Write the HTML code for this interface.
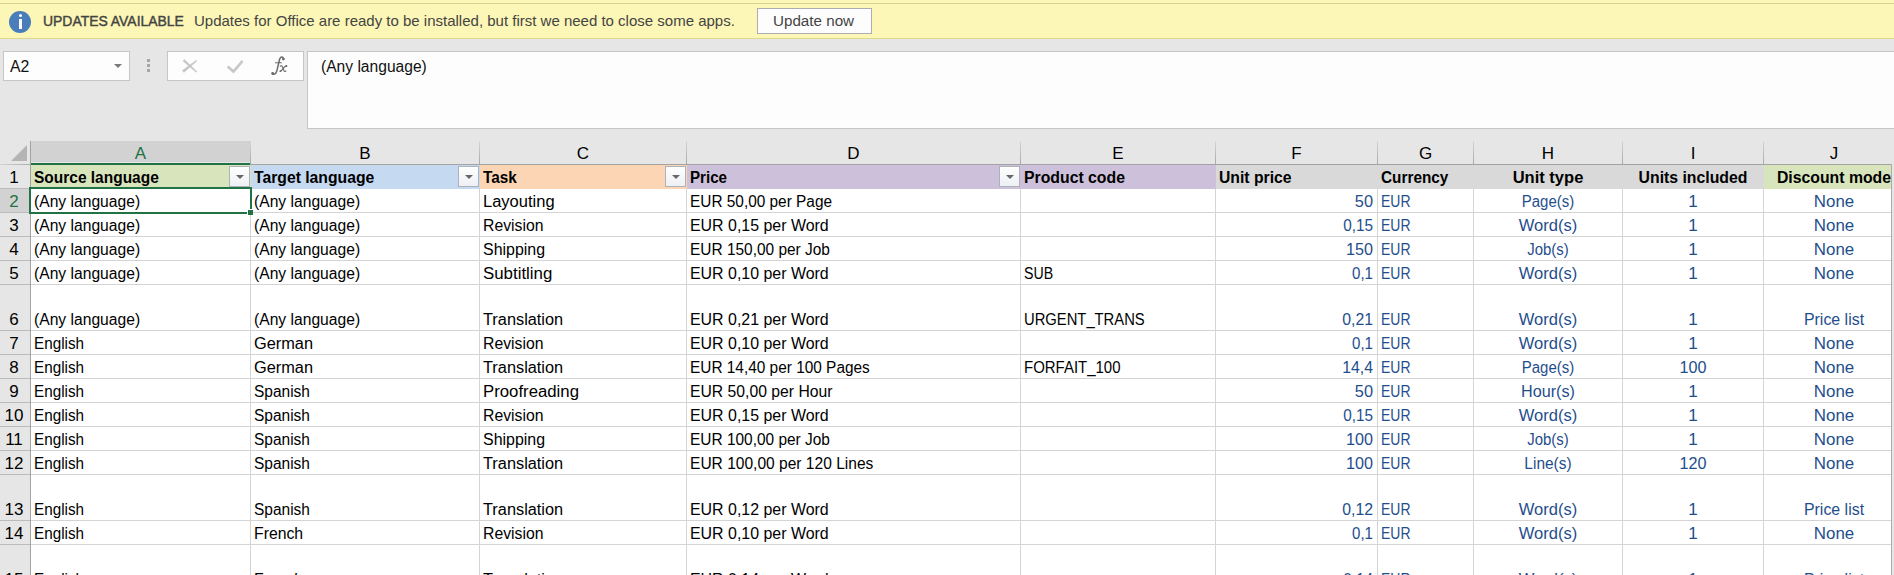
<!DOCTYPE html><html><head><meta charset="utf-8"><style>
html,body{margin:0;padding:0;}
body{width:1894px;height:575px;overflow:hidden;position:relative;background:#E6E6E6;font-family:"Liberation Sans", sans-serif;}
.a{position:absolute;}
.t{position:absolute;white-space:nowrap;font-size:15.8px;line-height:18px;}
.b{font-weight:bold;}
.gv{position:absolute;width:1px;background:#D4D4D4;}
.gh{position:absolute;height:1px;background:#D4D4D4;}
</style></head><body>
<div class="a" style="left:0;top:0;width:1894px;height:39px;background:#FCF7B6;"></div>
<div class="a" style="left:0;top:3px;width:1894px;height:1px;background:#D6D28A;"></div>
<div class="a" style="left:0;top:38px;width:1894px;height:1px;background:#DCD88E;"></div>
<div class="a" style="left:9px;top:11px;width:22px;height:22px;border-radius:50%;background:#4A7EBB;"></div>
<div class="a" style="left:18.5px;top:14px;width:3px;height:3px;border-radius:50%;background:#fff;"></div>
<div class="a" style="left:18.5px;top:19px;width:3px;height:10px;background:#fff;"></div>
<div class="t" id="upd" style="left:43px;top:12px;font-size:15.4px;color:#444;-webkit-text-stroke:0.45px #444;transform:scaleX(0.905);transform-origin:0 0;">UPDATES AVAILABLE</div>
<div class="t" id="msg" style="left:194px;top:12px;font-size:15px;color:#444;">Updates for Office are ready to be installed, but first we need to close some apps.</div>
<div class="a" style="left:757px;top:8px;width:113px;height:24px;background:#FDFDFD;border:1px solid #ABADB3;"></div>
<div class="t" id="btn" style="left:773px;top:12px;font-size:15.2px;color:#444;">Update now</div>
<div class="a" style="left:3px;top:51px;width:125px;height:28px;background:#FDFDFD;border:1px solid #C6C6C6;"></div>
<div class="t" id="nb" style="left:10px;top:58px;color:#111;font-size:15.8px;">A2</div>
<div class="a" style="left:113.5px;top:64px;width:0;height:0;border-left:4px solid transparent;border-right:4px solid transparent;border-top:4px solid #7A7A7A;"></div>
<div class="a" style="left:147px;top:59px;width:3px;height:3px;background:#A6A6A6;"></div>
<div class="a" style="left:147px;top:64px;width:3px;height:3px;background:#A6A6A6;"></div>
<div class="a" style="left:147px;top:69px;width:3px;height:3px;background:#A6A6A6;"></div>
<div class="a" style="left:167px;top:51px;width:135px;height:28px;background:#FDFDFD;border:1px solid #C6C6C6;"></div>
<svg class="a" style="left:176px;top:54px;" width="74" height="24" viewBox="0 0 74 24"><g fill="#C6C6C6" stroke="#C6C6C6" stroke-width="0.5" stroke-linejoin="round"><polygon points="6.96,7.12 8.44,5.48 20.84,17.53 20.16,18.27"/><polygon points="20.19,6.31 20.81,7.09 7.85,18.43 6.35,16.57"/></g><path d="M51.6 12.4 L57.5 17.6 L66.6 6.9" stroke="#C8C8C8" stroke-width="2.6" fill="none" stroke-linejoin="miter"/></svg>
<svg class="a" style="left:264px;top:52px;" width="30" height="28" viewBox="0 0 30 28"><g stroke="#6a6a6a" fill="none" stroke-linecap="round"><path d="M19.6 7.0 C19.2 4.6 16.9 4.0 15.8 6.8 C15.0 9.0 13.6 16.5 12.6 19.6 C11.9 21.8 10.4 22.8 8.8 21.8" stroke-width="1.5"/><path d="M11.4 10.8 H17.4" stroke-width="1.1"/><path d="M16.3 14.1 C17.5 13.3 18.3 14.0 18.8 15.5 L19.9 18.6 C20.3 19.6 21.0 19.8 21.8 19.0" stroke-width="1.15"/><path d="M22.6 13.9 C21.6 13.6 20.8 14.6 19.8 15.8 L17.6 18.4 C16.9 19.2 16.5 19.4 16.2 19.2" stroke-width="1.15"/></g><circle cx="19.4" cy="7.1" r="1.35" fill="#6a6a6a"/><circle cx="8.7" cy="21.5" r="1.45" fill="#6a6a6a"/><circle cx="22.4" cy="14.0" r="0.9" fill="#6a6a6a"/><circle cx="16.4" cy="19.1" r="0.9" fill="#6a6a6a"/></svg>
<div class="a" style="left:307px;top:51px;width:1600px;height:76px;background:#FDFDFD;border:1px solid #C6C6C6;"></div>
<div class="t" id="fb" style="left:321px;top:58px;color:#111;font-size:15.6px;">(Any language)</div>
<div class="a" style="left:0;top:141px;width:1891px;height:23px;background:#E6E6E6;"></div>
<div class="a" style="left:31px;top:141px;width:219px;height:21px;background:#D2D2D2;"></div>
<div class="a" style="left:31px;top:163px;width:219px;height:2px;background:#217346;"></div>
<div class="a" style="left:0;top:164px;width:31px;height:1px;background:linear-gradient(to right,#D2D2D2,#ABABAB);"></div>
<div class="a" style="left:250px;top:164px;width:1641px;height:1px;background:#A3A3A3;"></div>
<div class="a" style="left:250px;top:141px;width:1px;height:23px;background:linear-gradient(#D6D6D6,#A8A8A8);"></div>
<div class="a" style="left:479px;top:141px;width:1px;height:23px;background:linear-gradient(#D6D6D6,#A8A8A8);"></div>
<div class="a" style="left:686px;top:141px;width:1px;height:23px;background:linear-gradient(#D6D6D6,#A8A8A8);"></div>
<div class="a" style="left:1020px;top:141px;width:1px;height:23px;background:linear-gradient(#D6D6D6,#A8A8A8);"></div>
<div class="a" style="left:1215px;top:141px;width:1px;height:23px;background:linear-gradient(#D6D6D6,#A8A8A8);"></div>
<div class="a" style="left:1377px;top:141px;width:1px;height:23px;background:linear-gradient(#D6D6D6,#A8A8A8);"></div>
<div class="a" style="left:1473px;top:141px;width:1px;height:23px;background:linear-gradient(#D6D6D6,#A8A8A8);"></div>
<div class="a" style="left:1622px;top:141px;width:1px;height:23px;background:linear-gradient(#D6D6D6,#A8A8A8);"></div>
<div class="a" style="left:1763px;top:141px;width:1px;height:23px;background:linear-gradient(#D6D6D6,#A8A8A8);"></div>
<div class="t" style="left:31px;width:219px;top:145px;text-align:center;color:#217346;font-size:17px;">A</div>
<div class="t" style="left:251px;width:228px;top:145px;text-align:center;color:#000;font-size:17px;">B</div>
<div class="t" style="left:480px;width:206px;top:145px;text-align:center;color:#000;font-size:17px;">C</div>
<div class="t" style="left:687px;width:333px;top:145px;text-align:center;color:#000;font-size:17px;">D</div>
<div class="t" style="left:1021px;width:194px;top:145px;text-align:center;color:#000;font-size:17px;">E</div>
<div class="t" style="left:1216px;width:161px;top:145px;text-align:center;color:#000;font-size:17px;">F</div>
<div class="t" style="left:1378px;width:95px;top:145px;text-align:center;color:#000;font-size:17px;">G</div>
<div class="t" style="left:1474px;width:148px;top:145px;text-align:center;color:#000;font-size:17px;">H</div>
<div class="t" style="left:1623px;width:140px;top:145px;text-align:center;color:#000;font-size:17px;">I</div>
<div class="t" style="left:1764px;width:140px;top:145px;text-align:center;color:#000;font-size:17px;">J</div>
<svg class="a" style="left:11px;top:145px;" width="17" height="16" viewBox="0 0 17 16"><path d="M16 0 L16 16 L0 16 Z" fill="#B4B4B4"/></svg>
<div class="a" style="left:31px;top:165px;width:1860px;height:410px;background:#FFFFFF;"></div>
<div class="a" style="left:0;top:165px;width:30px;height:410px;background:#E6E6E6;"></div>
<div class="a" style="left:0;top:189px;width:30px;height:23px;background:#D2D2D2;"></div>
<div class="a" style="left:30px;top:141px;width:1px;height:434px;background:#A3A3A3;"></div>
<div class="gv" style="left:250px;top:189px;height:386px;"></div>
<div class="gv" style="left:479px;top:189px;height:386px;"></div>
<div class="gv" style="left:686px;top:189px;height:386px;"></div>
<div class="gv" style="left:1020px;top:189px;height:386px;"></div>
<div class="gv" style="left:1215px;top:189px;height:386px;"></div>
<div class="gv" style="left:1377px;top:189px;height:386px;"></div>
<div class="gv" style="left:1473px;top:189px;height:386px;"></div>
<div class="gv" style="left:1622px;top:189px;height:386px;"></div>
<div class="gv" style="left:1763px;top:189px;height:386px;"></div>
<div class="gh" style="left:31px;top:212px;width:1860px;"></div>
<div class="a" style="left:0;top:212px;width:30px;height:1px;background:#BBBBBB;"></div>
<div class="gh" style="left:31px;top:236px;width:1860px;"></div>
<div class="a" style="left:0;top:236px;width:30px;height:1px;background:#BBBBBB;"></div>
<div class="gh" style="left:31px;top:260px;width:1860px;"></div>
<div class="a" style="left:0;top:260px;width:30px;height:1px;background:#BBBBBB;"></div>
<div class="gh" style="left:31px;top:284px;width:1860px;"></div>
<div class="a" style="left:0;top:284px;width:30px;height:1px;background:#BBBBBB;"></div>
<div class="gh" style="left:31px;top:330px;width:1860px;"></div>
<div class="a" style="left:0;top:330px;width:30px;height:1px;background:#BBBBBB;"></div>
<div class="gh" style="left:31px;top:354px;width:1860px;"></div>
<div class="a" style="left:0;top:354px;width:30px;height:1px;background:#BBBBBB;"></div>
<div class="gh" style="left:31px;top:378px;width:1860px;"></div>
<div class="a" style="left:0;top:378px;width:30px;height:1px;background:#BBBBBB;"></div>
<div class="gh" style="left:31px;top:402px;width:1860px;"></div>
<div class="a" style="left:0;top:402px;width:30px;height:1px;background:#BBBBBB;"></div>
<div class="gh" style="left:31px;top:426px;width:1860px;"></div>
<div class="a" style="left:0;top:426px;width:30px;height:1px;background:#BBBBBB;"></div>
<div class="gh" style="left:31px;top:450px;width:1860px;"></div>
<div class="a" style="left:0;top:450px;width:30px;height:1px;background:#BBBBBB;"></div>
<div class="gh" style="left:31px;top:474px;width:1860px;"></div>
<div class="a" style="left:0;top:474px;width:30px;height:1px;background:#BBBBBB;"></div>
<div class="gh" style="left:31px;top:520px;width:1860px;"></div>
<div class="a" style="left:0;top:520px;width:30px;height:1px;background:#BBBBBB;"></div>
<div class="gh" style="left:31px;top:544px;width:1860px;"></div>
<div class="a" style="left:0;top:544px;width:30px;height:1px;background:#BBBBBB;"></div>
<div class="a" style="left:0;top:188px;width:30px;height:1px;background:#BBBBBB;"></div>
<div class="a" style="left:1891px;top:164px;width:1px;height:411px;background:#ABABAB;"></div>
<div class="a" style="left:31px;top:165px;width:220px;height:24px;background:#D8E4BC;"></div>
<div class="a" style="left:251px;top:165px;width:229px;height:24px;background:#C5D9F1;"></div>
<div class="a" style="left:480px;top:165px;width:207px;height:24px;background:#FCD5B4;"></div>
<div class="a" style="left:687px;top:165px;width:334px;height:24px;background:#CCC0DA;"></div>
<div class="a" style="left:1021px;top:165px;width:195px;height:24px;background:#CCC0DA;"></div>
<div class="a" style="left:1216px;top:165px;width:162px;height:24px;background:#D9D9D9;"></div>
<div class="a" style="left:1378px;top:165px;width:96px;height:24px;background:#D9D9D9;"></div>
<div class="a" style="left:1474px;top:165px;width:149px;height:24px;background:#D9D9D9;"></div>
<div class="a" style="left:1623px;top:165px;width:141px;height:24px;background:#D9D9D9;"></div>
<div class="a" style="left:1764px;top:165px;width:127px;height:24px;background:#D8E4BC;"></div>
<div class="t b" style="left:34px;top:168.53px;transform:scaleX(0.9803);transform-origin:0 0;color:#000;">Source language</div>
<div class="t b" style="left:254px;top:168.53px;transform:scaleX(0.9950);transform-origin:0 0;color:#000;">Target language</div>
<div class="t b" style="left:483px;top:168.53px;transform:scaleX(0.9714);transform-origin:0 0;color:#000;">Task</div>
<div class="t b" style="left:690px;top:168.53px;transform:scaleX(0.9568);transform-origin:0 0;color:#000;">Price</div>
<div class="t b" style="left:1024px;top:168.53px;transform:scaleX(1.0000);transform-origin:0 0;color:#000;">Product code</div>
<div class="t b" style="left:1219px;top:168.53px;transform:scaleX(0.9958);transform-origin:0 0;color:#000;">Unit price</div>
<div class="t b" style="left:1381px;top:168.53px;transform:scaleX(0.9710);transform-origin:0 0;color:#000;">Currency</div>
<div class="t b" style="left:1474px;width:148px;top:168.53px;text-align:center;transform:scaleX(1.0455);transform-origin:50% 0;color:#000;">Unit type</div>
<div class="t b" style="left:1623px;width:140px;top:168.53px;text-align:center;transform:scaleX(1.0000);transform-origin:50% 0;color:#000;">Units included</div>
<div class="t b" style="left:1764px;width:140px;top:168.53px;text-align:center;transform:scaleX(1.0000);transform-origin:50% 0;color:#000;">Discount mode</div>
<div class="a" style="left:229px;top:166px;width:19px;height:19px;background:linear-gradient(#FEFEFE,#EDF0F4);border:1px solid #AEB2B8;"></div>
<div class="a" style="left:235.5px;top:175px;width:0;height:0;border-left:4px solid transparent;border-right:4px solid transparent;border-top:4px solid #666;"></div>
<div class="a" style="left:458px;top:166px;width:19px;height:19px;background:linear-gradient(#FEFEFE,#EDF0F4);border:1px solid #AEB2B8;"></div>
<div class="a" style="left:464.5px;top:175px;width:0;height:0;border-left:4px solid transparent;border-right:4px solid transparent;border-top:4px solid #666;"></div>
<div class="a" style="left:665px;top:166px;width:19px;height:19px;background:linear-gradient(#FEFEFE,#EDF0F4);border:1px solid #AEB2B8;"></div>
<div class="a" style="left:671.5px;top:175px;width:0;height:0;border-left:4px solid transparent;border-right:4px solid transparent;border-top:4px solid #666;"></div>
<div class="a" style="left:999px;top:166px;width:19px;height:19px;background:linear-gradient(#FEFEFE,#EDF0F4);border:1px solid #AEB2B8;"></div>
<div class="a" style="left:1005.5px;top:175px;width:0;height:0;border-left:4px solid transparent;border-right:4px solid transparent;border-top:4px solid #666;"></div>
<div class="t" style="left:34px;top:192.53px;transform:scaleX(0.9906);transform-origin:0 0;color:#000;">(Any language)</div>
<div class="t" style="left:254px;top:192.53px;transform:scaleX(0.9906);transform-origin:0 0;color:#000;">(Any language)</div>
<div class="t" style="left:483px;top:192.53px;transform:scaleX(1.0448);transform-origin:0 0;color:#000;">Layouting</div>
<div class="t" style="left:690px;top:192.53px;transform:scaleX(0.9743);transform-origin:0 0;color:#000;">EUR 50,00 per Page</div>
<div class="t" style="left:1216px;width:157px;top:192.53px;text-align:right;transform:scaleX(1.0343);transform-origin:100% 0;color:#1F4E8C;">50</div>
<div class="t" style="left:1381px;top:192.53px;transform:scaleX(0.8837);transform-origin:0 0;color:#1F4E8C;">EUR</div>
<div class="t" style="left:1474px;width:148px;top:192.53px;text-align:center;transform:scaleX(0.9486);transform-origin:50% 0;color:#1F4E8C;">Page(s)</div>
<div class="t" style="left:1623px;width:140px;top:192.53px;text-align:center;transform:scaleX(1.0749);transform-origin:50% 0;color:#1F4E8C;">1</div>
<div class="t" style="left:1764px;width:140px;top:192.53px;text-align:center;transform:scaleX(1.0694);transform-origin:50% 0;color:#1F4E8C;">None</div>
<div class="t" style="left:0;width:28px;top:192.53px;text-align:center;color:#217346;font-size:17px;">2</div>
<div class="t" style="left:34px;top:216.53px;transform:scaleX(0.9906);transform-origin:0 0;color:#000;">(Any language)</div>
<div class="t" style="left:254px;top:216.53px;transform:scaleX(0.9906);transform-origin:0 0;color:#000;">(Any language)</div>
<div class="t" style="left:483px;top:216.53px;transform:scaleX(0.9985);transform-origin:0 0;color:#000;">Revision</div>
<div class="t" style="left:690px;top:216.53px;transform:scaleX(1.0079);transform-origin:0 0;color:#000;">EUR 0,15 per Word</div>
<div class="t" style="left:1216px;width:157px;top:216.53px;text-align:right;transform:scaleX(0.9685);transform-origin:100% 0;color:#1F4E8C;">0,15</div>
<div class="t" style="left:1381px;top:216.53px;transform:scaleX(0.8837);transform-origin:0 0;color:#1F4E8C;">EUR</div>
<div class="t" style="left:1474px;width:148px;top:216.53px;text-align:center;transform:scaleX(1.0455);transform-origin:50% 0;color:#1F4E8C;">Word(s)</div>
<div class="t" style="left:1623px;width:140px;top:216.53px;text-align:center;transform:scaleX(1.0749);transform-origin:50% 0;color:#1F4E8C;">1</div>
<div class="t" style="left:1764px;width:140px;top:216.53px;text-align:center;transform:scaleX(1.0694);transform-origin:50% 0;color:#1F4E8C;">None</div>
<div class="t" style="left:0;width:28px;top:216.53px;text-align:center;color:#000;font-size:17px;">3</div>
<div class="t" style="left:34px;top:240.53px;transform:scaleX(0.9906);transform-origin:0 0;color:#000;">(Any language)</div>
<div class="t" style="left:254px;top:240.53px;transform:scaleX(0.9906);transform-origin:0 0;color:#000;">(Any language)</div>
<div class="t" style="left:483px;top:240.53px;transform:scaleX(1.0098);transform-origin:0 0;color:#000;">Shipping</div>
<div class="t" style="left:690px;top:240.53px;transform:scaleX(0.9771);transform-origin:0 0;color:#000;">EUR 150,00 per Job</div>
<div class="t" style="left:1216px;width:157px;top:240.53px;text-align:right;transform:scaleX(1.0230);transform-origin:100% 0;color:#1F4E8C;">150</div>
<div class="t" style="left:1381px;top:240.53px;transform:scaleX(0.8837);transform-origin:0 0;color:#1F4E8C;">EUR</div>
<div class="t" style="left:1474px;width:148px;top:240.53px;text-align:center;transform:scaleX(0.9454);transform-origin:50% 0;color:#1F4E8C;">Job(s)</div>
<div class="t" style="left:1623px;width:140px;top:240.53px;text-align:center;transform:scaleX(1.0749);transform-origin:50% 0;color:#1F4E8C;">1</div>
<div class="t" style="left:1764px;width:140px;top:240.53px;text-align:center;transform:scaleX(1.0694);transform-origin:50% 0;color:#1F4E8C;">None</div>
<div class="t" style="left:0;width:28px;top:240.53px;text-align:center;color:#000;font-size:17px;">4</div>
<div class="t" style="left:34px;top:264.53px;transform:scaleX(0.9906);transform-origin:0 0;color:#000;">(Any language)</div>
<div class="t" style="left:254px;top:264.53px;transform:scaleX(0.9906);transform-origin:0 0;color:#000;">(Any language)</div>
<div class="t" style="left:483px;top:264.53px;transform:scaleX(1.0674);transform-origin:0 0;color:#000;">Subtitling</div>
<div class="t" style="left:690px;top:264.53px;transform:scaleX(1.0079);transform-origin:0 0;color:#000;">EUR 0,10 per Word</div>
<div class="t" style="left:1024px;top:264.53px;transform:scaleX(0.8962);transform-origin:0 0;color:#000;">SUB</div>
<div class="t" style="left:1216px;width:157px;top:264.53px;text-align:right;transform:scaleX(0.9545);transform-origin:100% 0;color:#1F4E8C;">0,1</div>
<div class="t" style="left:1381px;top:264.53px;transform:scaleX(0.8837);transform-origin:0 0;color:#1F4E8C;">EUR</div>
<div class="t" style="left:1474px;width:148px;top:264.53px;text-align:center;transform:scaleX(1.0455);transform-origin:50% 0;color:#1F4E8C;">Word(s)</div>
<div class="t" style="left:1623px;width:140px;top:264.53px;text-align:center;transform:scaleX(1.0749);transform-origin:50% 0;color:#1F4E8C;">1</div>
<div class="t" style="left:1764px;width:140px;top:264.53px;text-align:center;transform:scaleX(1.0694);transform-origin:50% 0;color:#1F4E8C;">None</div>
<div class="t" style="left:0;width:28px;top:264.53px;text-align:center;color:#000;font-size:17px;">5</div>
<div class="t" style="left:34px;top:310.53px;transform:scaleX(0.9906);transform-origin:0 0;color:#000;">(Any language)</div>
<div class="t" style="left:254px;top:310.53px;transform:scaleX(0.9906);transform-origin:0 0;color:#000;">(Any language)</div>
<div class="t" style="left:483px;top:310.53px;transform:scaleX(1.0335);transform-origin:0 0;color:#000;">Translation</div>
<div class="t" style="left:690px;top:310.53px;transform:scaleX(1.0079);transform-origin:0 0;color:#000;">EUR 0,21 per Word</div>
<div class="t" style="left:1024px;top:310.53px;transform:scaleX(0.9352);transform-origin:0 0;color:#000;">URGENT_TRANS</div>
<div class="t" style="left:1216px;width:157px;top:310.53px;text-align:right;transform:scaleX(1.0008);transform-origin:100% 0;color:#1F4E8C;">0,21</div>
<div class="t" style="left:1381px;top:310.53px;transform:scaleX(0.8837);transform-origin:0 0;color:#1F4E8C;">EUR</div>
<div class="t" style="left:1474px;width:148px;top:310.53px;text-align:center;transform:scaleX(1.0455);transform-origin:50% 0;color:#1F4E8C;">Word(s)</div>
<div class="t" style="left:1623px;width:140px;top:310.53px;text-align:center;transform:scaleX(1.0749);transform-origin:50% 0;color:#1F4E8C;">1</div>
<div class="t" style="left:1764px;width:140px;top:310.53px;text-align:center;transform:scaleX(1.0082);transform-origin:50% 0;color:#1F4E8C;">Price list</div>
<div class="t" style="left:0;width:28px;top:310.53px;text-align:center;color:#000;font-size:17px;">6</div>
<div class="t" style="left:34px;top:334.53px;transform:scaleX(0.9660);transform-origin:0 0;color:#000;">English</div>
<div class="t" style="left:254px;top:334.53px;transform:scaleX(1.0346);transform-origin:0 0;color:#000;">German</div>
<div class="t" style="left:483px;top:334.53px;transform:scaleX(0.9985);transform-origin:0 0;color:#000;">Revision</div>
<div class="t" style="left:690px;top:334.53px;transform:scaleX(1.0079);transform-origin:0 0;color:#000;">EUR 0,10 per Word</div>
<div class="t" style="left:1216px;width:157px;top:334.53px;text-align:right;transform:scaleX(0.9545);transform-origin:100% 0;color:#1F4E8C;">0,1</div>
<div class="t" style="left:1381px;top:334.53px;transform:scaleX(0.8837);transform-origin:0 0;color:#1F4E8C;">EUR</div>
<div class="t" style="left:1474px;width:148px;top:334.53px;text-align:center;transform:scaleX(1.0455);transform-origin:50% 0;color:#1F4E8C;">Word(s)</div>
<div class="t" style="left:1623px;width:140px;top:334.53px;text-align:center;transform:scaleX(1.0749);transform-origin:50% 0;color:#1F4E8C;">1</div>
<div class="t" style="left:1764px;width:140px;top:334.53px;text-align:center;transform:scaleX(1.0694);transform-origin:50% 0;color:#1F4E8C;">None</div>
<div class="t" style="left:0;width:28px;top:334.53px;text-align:center;color:#000;font-size:17px;">7</div>
<div class="t" style="left:34px;top:358.53px;transform:scaleX(0.9660);transform-origin:0 0;color:#000;">English</div>
<div class="t" style="left:254px;top:358.53px;transform:scaleX(1.0346);transform-origin:0 0;color:#000;">German</div>
<div class="t" style="left:483px;top:358.53px;transform:scaleX(1.0335);transform-origin:0 0;color:#000;">Translation</div>
<div class="t" style="left:690px;top:358.53px;transform:scaleX(0.9749);transform-origin:0 0;color:#000;">EUR 14,40 per 100 Pages</div>
<div class="t" style="left:1024px;top:358.53px;transform:scaleX(0.9474);transform-origin:0 0;color:#000;">FORFAIT_100</div>
<div class="t" style="left:1216px;width:157px;top:358.53px;text-align:right;transform:scaleX(1.0008);transform-origin:100% 0;color:#1F4E8C;">14,4</div>
<div class="t" style="left:1381px;top:358.53px;transform:scaleX(0.8837);transform-origin:0 0;color:#1F4E8C;">EUR</div>
<div class="t" style="left:1474px;width:148px;top:358.53px;text-align:center;transform:scaleX(0.9486);transform-origin:50% 0;color:#1F4E8C;">Page(s)</div>
<div class="t" style="left:1623px;width:140px;top:358.53px;text-align:center;transform:scaleX(1.0230);transform-origin:50% 0;color:#1F4E8C;">100</div>
<div class="t" style="left:1764px;width:140px;top:358.53px;text-align:center;transform:scaleX(1.0694);transform-origin:50% 0;color:#1F4E8C;">None</div>
<div class="t" style="left:0;width:28px;top:358.53px;text-align:center;color:#000;font-size:17px;">8</div>
<div class="t" style="left:34px;top:382.53px;transform:scaleX(0.9660);transform-origin:0 0;color:#000;">English</div>
<div class="t" style="left:254px;top:382.53px;transform:scaleX(0.9800);transform-origin:0 0;color:#000;">Spanish</div>
<div class="t" style="left:483px;top:382.53px;transform:scaleX(1.0607);transform-origin:0 0;color:#000;">Proofreading</div>
<div class="t" style="left:690px;top:382.53px;transform:scaleX(0.9954);transform-origin:0 0;color:#000;">EUR 50,00 per Hour</div>
<div class="t" style="left:1216px;width:157px;top:382.53px;text-align:right;transform:scaleX(1.0343);transform-origin:100% 0;color:#1F4E8C;">50</div>
<div class="t" style="left:1381px;top:382.53px;transform:scaleX(0.8837);transform-origin:0 0;color:#1F4E8C;">EUR</div>
<div class="t" style="left:1474px;width:148px;top:382.53px;text-align:center;transform:scaleX(1.0250);transform-origin:50% 0;color:#1F4E8C;">Hour(s)</div>
<div class="t" style="left:1623px;width:140px;top:382.53px;text-align:center;transform:scaleX(1.0749);transform-origin:50% 0;color:#1F4E8C;">1</div>
<div class="t" style="left:1764px;width:140px;top:382.53px;text-align:center;transform:scaleX(1.0694);transform-origin:50% 0;color:#1F4E8C;">None</div>
<div class="t" style="left:0;width:28px;top:382.53px;text-align:center;color:#000;font-size:17px;">9</div>
<div class="t" style="left:34px;top:406.53px;transform:scaleX(0.9660);transform-origin:0 0;color:#000;">English</div>
<div class="t" style="left:254px;top:406.53px;transform:scaleX(0.9800);transform-origin:0 0;color:#000;">Spanish</div>
<div class="t" style="left:483px;top:406.53px;transform:scaleX(0.9985);transform-origin:0 0;color:#000;">Revision</div>
<div class="t" style="left:690px;top:406.53px;transform:scaleX(1.0079);transform-origin:0 0;color:#000;">EUR 0,15 per Word</div>
<div class="t" style="left:1216px;width:157px;top:406.53px;text-align:right;transform:scaleX(0.9685);transform-origin:100% 0;color:#1F4E8C;">0,15</div>
<div class="t" style="left:1381px;top:406.53px;transform:scaleX(0.8837);transform-origin:0 0;color:#1F4E8C;">EUR</div>
<div class="t" style="left:1474px;width:148px;top:406.53px;text-align:center;transform:scaleX(1.0455);transform-origin:50% 0;color:#1F4E8C;">Word(s)</div>
<div class="t" style="left:1623px;width:140px;top:406.53px;text-align:center;transform:scaleX(1.0749);transform-origin:50% 0;color:#1F4E8C;">1</div>
<div class="t" style="left:1764px;width:140px;top:406.53px;text-align:center;transform:scaleX(1.0694);transform-origin:50% 0;color:#1F4E8C;">None</div>
<div class="t" style="left:0;width:28px;top:406.53px;text-align:center;color:#000;font-size:17px;">10</div>
<div class="t" style="left:34px;top:430.53px;transform:scaleX(0.9660);transform-origin:0 0;color:#000;">English</div>
<div class="t" style="left:254px;top:430.53px;transform:scaleX(0.9800);transform-origin:0 0;color:#000;">Spanish</div>
<div class="t" style="left:483px;top:430.53px;transform:scaleX(1.0098);transform-origin:0 0;color:#000;">Shipping</div>
<div class="t" style="left:690px;top:430.53px;transform:scaleX(0.9771);transform-origin:0 0;color:#000;">EUR 100,00 per Job</div>
<div class="t" style="left:1216px;width:157px;top:430.53px;text-align:right;transform:scaleX(1.0230);transform-origin:100% 0;color:#1F4E8C;">100</div>
<div class="t" style="left:1381px;top:430.53px;transform:scaleX(0.8837);transform-origin:0 0;color:#1F4E8C;">EUR</div>
<div class="t" style="left:1474px;width:148px;top:430.53px;text-align:center;transform:scaleX(0.9454);transform-origin:50% 0;color:#1F4E8C;">Job(s)</div>
<div class="t" style="left:1623px;width:140px;top:430.53px;text-align:center;transform:scaleX(1.0749);transform-origin:50% 0;color:#1F4E8C;">1</div>
<div class="t" style="left:1764px;width:140px;top:430.53px;text-align:center;transform:scaleX(1.0694);transform-origin:50% 0;color:#1F4E8C;">None</div>
<div class="t" style="left:0;width:28px;top:430.53px;text-align:center;color:#000;font-size:17px;">11</div>
<div class="t" style="left:34px;top:454.53px;transform:scaleX(0.9660);transform-origin:0 0;color:#000;">English</div>
<div class="t" style="left:254px;top:454.53px;transform:scaleX(0.9800);transform-origin:0 0;color:#000;">Spanish</div>
<div class="t" style="left:483px;top:454.53px;transform:scaleX(1.0335);transform-origin:0 0;color:#000;">Translation</div>
<div class="t" style="left:690px;top:454.53px;transform:scaleX(0.9847);transform-origin:0 0;color:#000;">EUR 100,00 per 120 Lines</div>
<div class="t" style="left:1216px;width:157px;top:454.53px;text-align:right;transform:scaleX(1.0230);transform-origin:100% 0;color:#1F4E8C;">100</div>
<div class="t" style="left:1381px;top:454.53px;transform:scaleX(0.8837);transform-origin:0 0;color:#1F4E8C;">EUR</div>
<div class="t" style="left:1474px;width:148px;top:454.53px;text-align:center;transform:scaleX(0.9789);transform-origin:50% 0;color:#1F4E8C;">Line(s)</div>
<div class="t" style="left:1623px;width:140px;top:454.53px;text-align:center;transform:scaleX(1.0230);transform-origin:50% 0;color:#1F4E8C;">120</div>
<div class="t" style="left:1764px;width:140px;top:454.53px;text-align:center;transform:scaleX(1.0694);transform-origin:50% 0;color:#1F4E8C;">None</div>
<div class="t" style="left:0;width:28px;top:454.53px;text-align:center;color:#000;font-size:17px;">12</div>
<div class="t" style="left:34px;top:500.53px;transform:scaleX(0.9660);transform-origin:0 0;color:#000;">English</div>
<div class="t" style="left:254px;top:500.53px;transform:scaleX(0.9800);transform-origin:0 0;color:#000;">Spanish</div>
<div class="t" style="left:483px;top:500.53px;transform:scaleX(1.0335);transform-origin:0 0;color:#000;">Translation</div>
<div class="t" style="left:690px;top:500.53px;transform:scaleX(1.0079);transform-origin:0 0;color:#000;">EUR 0,12 per Word</div>
<div class="t" style="left:1216px;width:157px;top:500.53px;text-align:right;transform:scaleX(1.0008);transform-origin:100% 0;color:#1F4E8C;">0,12</div>
<div class="t" style="left:1381px;top:500.53px;transform:scaleX(0.8837);transform-origin:0 0;color:#1F4E8C;">EUR</div>
<div class="t" style="left:1474px;width:148px;top:500.53px;text-align:center;transform:scaleX(1.0455);transform-origin:50% 0;color:#1F4E8C;">Word(s)</div>
<div class="t" style="left:1623px;width:140px;top:500.53px;text-align:center;transform:scaleX(1.0749);transform-origin:50% 0;color:#1F4E8C;">1</div>
<div class="t" style="left:1764px;width:140px;top:500.53px;text-align:center;transform:scaleX(1.0082);transform-origin:50% 0;color:#1F4E8C;">Price list</div>
<div class="t" style="left:0;width:28px;top:500.53px;text-align:center;color:#000;font-size:17px;">13</div>
<div class="t" style="left:34px;top:524.53px;transform:scaleX(0.9660);transform-origin:0 0;color:#000;">English</div>
<div class="t" style="left:254px;top:524.53px;transform:scaleX(0.9993);transform-origin:0 0;color:#000;">French</div>
<div class="t" style="left:483px;top:524.53px;transform:scaleX(0.9985);transform-origin:0 0;color:#000;">Revision</div>
<div class="t" style="left:690px;top:524.53px;transform:scaleX(1.0079);transform-origin:0 0;color:#000;">EUR 0,10 per Word</div>
<div class="t" style="left:1216px;width:157px;top:524.53px;text-align:right;transform:scaleX(0.9545);transform-origin:100% 0;color:#1F4E8C;">0,1</div>
<div class="t" style="left:1381px;top:524.53px;transform:scaleX(0.8837);transform-origin:0 0;color:#1F4E8C;">EUR</div>
<div class="t" style="left:1474px;width:148px;top:524.53px;text-align:center;transform:scaleX(1.0455);transform-origin:50% 0;color:#1F4E8C;">Word(s)</div>
<div class="t" style="left:1623px;width:140px;top:524.53px;text-align:center;transform:scaleX(1.0749);transform-origin:50% 0;color:#1F4E8C;">1</div>
<div class="t" style="left:1764px;width:140px;top:524.53px;text-align:center;transform:scaleX(1.0694);transform-origin:50% 0;color:#1F4E8C;">None</div>
<div class="t" style="left:0;width:28px;top:524.53px;text-align:center;color:#000;font-size:17px;">14</div>
<div class="t" style="left:34px;top:570.53px;transform:scaleX(0.9660);transform-origin:0 0;color:#000;">English</div>
<div class="t" style="left:254px;top:570.53px;transform:scaleX(0.9993);transform-origin:0 0;color:#000;">French</div>
<div class="t" style="left:483px;top:570.53px;transform:scaleX(1.0335);transform-origin:0 0;color:#000;">Translation</div>
<div class="t" style="left:690px;top:570.53px;transform:scaleX(1.0079);transform-origin:0 0;color:#000;">EUR 0,14 per Word</div>
<div class="t" style="left:1216px;width:157px;top:570.53px;text-align:right;transform:scaleX(0.9685);transform-origin:100% 0;color:#1F4E8C;">0,14</div>
<div class="t" style="left:1381px;top:570.53px;transform:scaleX(0.8837);transform-origin:0 0;color:#1F4E8C;">EUR</div>
<div class="t" style="left:1474px;width:148px;top:570.53px;text-align:center;transform:scaleX(1.0455);transform-origin:50% 0;color:#1F4E8C;">Word(s)</div>
<div class="t" style="left:1623px;width:140px;top:570.53px;text-align:center;transform:scaleX(1.0749);transform-origin:50% 0;color:#1F4E8C;">1</div>
<div class="t" style="left:1764px;width:140px;top:570.53px;text-align:center;transform:scaleX(1.0082);transform-origin:50% 0;color:#1F4E8C;">Price list</div>
<div class="t" style="left:0;width:28px;top:570.53px;text-align:center;color:#000;font-size:17px;">15</div>
<div class="t" style="left:0;width:28px;top:168.53px;text-align:center;color:#000;font-size:17px;">1</div>
<div class="a" style="left:29px;top:187px;width:219px;height:23px;border:2px solid #217346;"></div>
<div class="a" style="left:247px;top:209px;width:6px;height:6px;background:#fff;"></div>
<div class="a" style="left:248px;top:210px;width:5px;height:5px;background:#217346;"></div>
</body></html>
